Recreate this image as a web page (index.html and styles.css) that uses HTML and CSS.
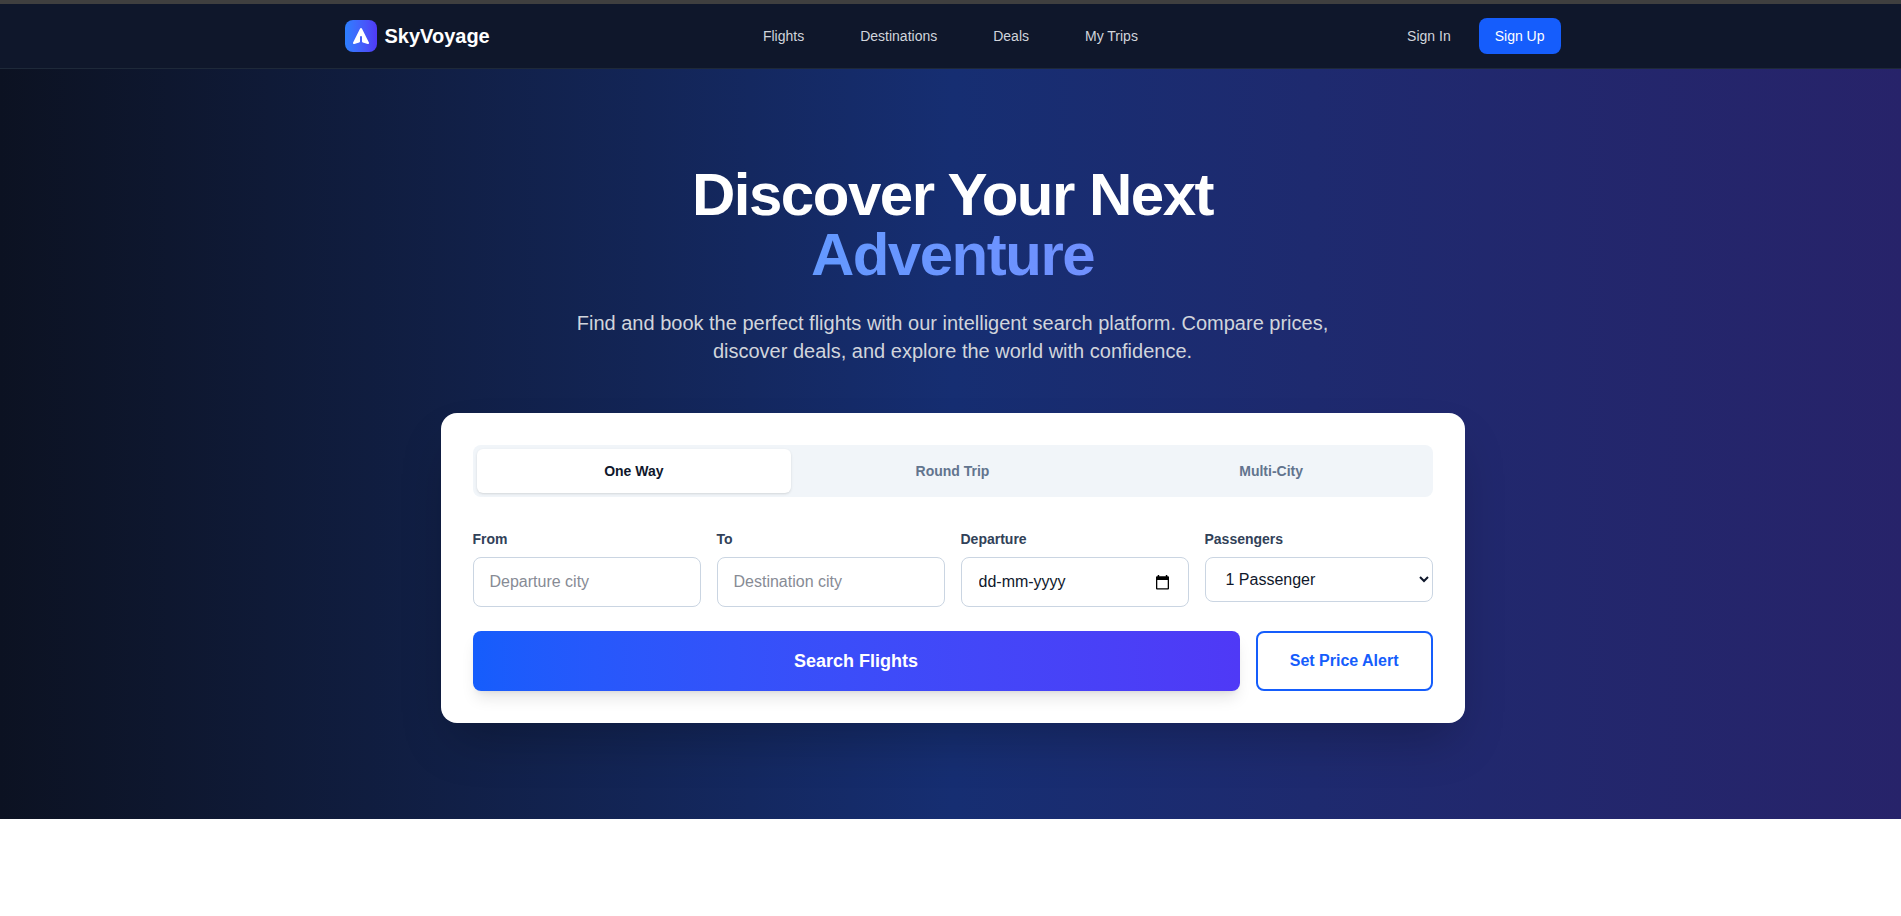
FILE: index.html
```html
<!DOCTYPE html>
<html lang="en">
<head>
<meta charset="utf-8">
<title>SkyVoyage</title>
<link rel="stylesheet" href="styles.css">
</head>
<body>
<div class="page">
  <header class="topbar">
    <div class="topbar-inner">
      <a class="brand" href="#">
        <span class="brand-mark">
          <svg width="20" height="20" viewBox="0 0 20 20" fill="currentColor" aria-hidden="true"><path d="M10.894 2.553a1 1 0 00-1.788 0l-7 14a1 1 0 001.169 1.409l5-1.429A1 1 0 009 15.571V11a1 1 0 112 0v4.571a1 1 0 00.725.962l5 1.428a1 1 0 001.17-1.408l-7-14z"/></svg>
        </span>
        <span class="brand-name">SkyVoyage</span>
      </a>
      <nav class="nav">
        <a href="#">Flights</a>
        <a href="#">Destinations</a>
        <a href="#">Deals</a>
        <a href="#">My Trips</a>
      </nav>
      <div class="account">
        <a class="sign-in" href="#">Sign In</a>
        <button class="sign-up" type="button">Sign Up</button>
      </div>
    </div>
  </header>

  <main class="hero">
    <h1 class="title">Discover Your Next <span class="title-accent">Adventure</span></h1>
    <p class="lead">Find and book the perfect flights with our intelligent search platform. Compare prices, discover deals, and explore the world with confidence.</p>

    <form class="search-card">
      <div class="tabs">
        <button class="tab tab-active" type="button">One Way</button>
        <button class="tab" type="button">Round Trip</button>
        <button class="tab" type="button">Multi-City</button>
      </div>

      <div class="fields">
        <div class="field">
          <label for="from">From</label>
          <input class="control" id="from" type="text" placeholder="Departure city">
        </div>
        <div class="field">
          <label for="to">To</label>
          <input class="control" id="to" type="text" placeholder="Destination city">
        </div>
        <div class="field">
          <label for="departure">Departure</label>
          <div class="control date">
            <input class="date-input" id="departure" type="text" placeholder="dd-mm-yyyy">
            <button class="date-button" type="button" aria-label="Open calendar">
              <svg width="13" height="16" viewBox="0 0 13 16" aria-hidden="true"><path fill="currentColor" fill-rule="evenodd" d="M1.700 1h1.500v1.300h6.600V1h1.500v1.300h.7a1 1 0 011 1V14.500a1 1 0 01-1 1H1a1 1 0 01-1-1V3.300a1 1 0 011-1h.7zM1.300 6v8.200h10.400V6z"/></svg>
            </button>
          </div>
        </div>
        <div class="field">
          <label for="passengers">Passengers</label>
          <select class="control select" id="passengers">
            <option>1 Passenger</option>
            <option>2 Passengers</option>
            <option>3 Passengers</option>
            <option>4+ Passengers</option>
          </select>
        </div>
      </div>

      <div class="actions">
        <button class="search-button" type="submit">Search Flights</button>
        <button class="alert-button" type="button">Set Price Alert</button>
      </div>
    </form>
  </main>
</div>
</body>
</html>
```

FILE: styles.css
```css
*,
*::before,
*::after {
  box-sizing: border-box;
}

body {
  margin: 0;
  overflow-x: hidden;
  background: #fff;
  color: #0f172b;
  font-family: "Liberation Sans", Arial, sans-serif;
  font-size: 16px;
  line-height: 24px;
}

h1,
p {
  margin: 0;
}

a {
  color: inherit;
  text-decoration: none;
}

button,
input,
select {
  margin: 0;
  font: inherit;
}

button {
  border: 0;
  padding: 0;
  background: none;
  cursor: pointer;
}

.page {
  margin-right: -4px;
}

/* Header */

.topbar {
  border-top: 4px solid #3f3f3f;
  border-bottom: 1px solid #1e2939;
  background: #0f172b;
}

.topbar-inner {
  display: flex;
  align-items: center;
  justify-content: space-between;
  max-width: 1280px;
  height: 64px;
  margin: 0 auto;
  padding: 0 32px;
}

.brand {
  display: flex;
  align-items: center;
  gap: 8px;
}

.brand-mark {
  display: flex;
  align-items: center;
  justify-content: center;
  width: 32px;
  height: 32px;
  border-radius: 8px;
  background: linear-gradient(to right in oklab, #2b7fff, #4f39f6);
  color: #fff;
}

.brand-name {
  color: #fff;
  font-size: 20px;
  font-weight: 700;
  line-height: 28px;
}

.nav {
  display: flex;
  gap: 56px;
  padding-left: 4px;
}

.nav,
.account {
  color: #d1d5dc;
  font-size: 14px;
  line-height: 20px;
}

.account {
  display: flex;
  align-items: center;
  gap: 28px;
}

.sign-up {
  padding: 8px 16px;
  border-radius: 8px;
  background: #155dfc;
  color: #fff;
}

/* Hero */

.hero {
  padding: 96px 32px;
  background: linear-gradient(to right in oklab, #0c1222, #162e72, #27236a);
}

.title {
  max-width: 896px;
  margin: 0 auto 24px;
  color: #fff;
  font-size: 60px;
  font-weight: 700;
  line-height: 60px;
  letter-spacing: -0.025em;
  text-align: center;
}

.title-accent {
  display: block;
  background: linear-gradient(to right in oklab, #51a2ff, #7c86ff);
  background-clip: text;
  color: transparent;
}

.lead {
  max-width: 768px;
  margin: 0 auto 48px;
  color: #d1d5dc;
  font-size: 20px;
  line-height: 28px;
  text-align: center;
}

/* Search card */

.search-card {
  max-width: 1024px;
  margin: 0 auto;
  padding: 32px;
  border-radius: 16px;
  background: #fff;
  box-shadow: 0 25px 50px -12px rgb(0 0 0 / 25%);
}

.tabs {
  display: grid;
  grid-template-columns: repeat(3, 1fr);
  gap: 4px;
  margin-bottom: 32px;
  padding: 4px;
  border-radius: 8px;
  background: #f1f5f9;
}

.tab {
  padding: 12px 16px;
  border-radius: 6px;
  color: #62748e;
  font-size: 14px;
  font-weight: 600;
  line-height: 20px;
}

.tab-active {
  background: #fff;
  box-shadow: 0 1px 3px rgb(0 0 0 / 10%), 0 1px 2px -1px rgb(0 0 0 / 10%);
  color: #0f172b;
}

.fields {
  display: grid;
  grid-template-columns: repeat(4, 1fr);
  align-items: start;
  gap: 16px;
  margin-bottom: 24px;
}

.field {
  display: flex;
  flex-direction: column;
  gap: 8px;
  min-width: 0;
}

.field label {
  color: #314158;
  font-size: 14px;
  font-weight: 600;
  line-height: 20px;
}

.control {
  width: 100%;
  padding: 12px 16px;
  border: 1px solid #cad5e2;
  border-radius: 8px;
  background: #fff;
  color: #0f172b;
  line-height: 24px;
}

.control::placeholder {
  color: #878b95;
}

.date {
  display: flex;
  align-items: center;
  justify-content: space-between;
}

.date-input {
  min-width: 0;
  flex: 1;
  height: 24px;
  padding: 0 1px;
  border: 0;
  background: none;
  color: inherit;
}

.date-input::placeholder {
  color: #0f172b;
}

.date-button {
  display: flex;
  padding: 0 3px;
  color: #000;
}

.select {
  line-height: normal;
}

.actions {
  display: flex;
  gap: 16px;
}

.search-button {
  flex: 1;
  padding: 16px 32px;
  border-radius: 8px;
  background: linear-gradient(to right in oklab, #155dfc, #4f39f6);
  box-shadow: 0 10px 15px -3px rgb(0 0 0 / 10%), 0 4px 6px -4px rgb(0 0 0 / 10%);
  color: #fff;
  font-size: 18px;
  font-weight: 600;
  line-height: 28px;
}

.alert-button {
  padding: 16px 32px;
  border: 2px solid #155dfc;
  border-radius: 8px;
  color: #155dfc;
  font-weight: 600;
}
```
